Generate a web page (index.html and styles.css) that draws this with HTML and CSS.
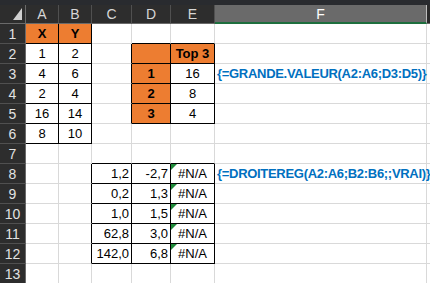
FILE: index.html
```html
<!DOCTYPE html>
<html>
<head>
<meta charset="utf-8">
<link rel="stylesheet" href="styles.css">
</head>
<body>
<div class="topbar"></div>
<div class="sheet">
  <div class="hd corner"><span class="tri"></span></div>
  <div class="hd">A</div>
  <div class="hd">B</div>
  <div class="hd">C</div>
  <div class="hd">D</div>
  <div class="hd">E</div>
  <div class="hd sel">F</div>
  <div class="hd rest"></div>

  <div class="rh">1</div>
  <div class="cell or bold c bx">X</div>
  <div class="cell or bold c bx">Y</div>
  <div class="cell"></div>
  <div class="cell bb"></div>
  <div class="cell bb"></div>
  <div class="cell"></div>
  <div class="cell end"></div>

  <div class="rh">2</div>
  <div class="cell c bx">1</div>
  <div class="cell c bx">2</div>
  <div class="cell br"></div>
  <div class="cell or bx"></div>
  <div class="cell or bold c bx">Top 3</div>
  <div class="cell"></div>
  <div class="cell end"></div>

  <div class="rh">3</div>
  <div class="cell c bx">4</div>
  <div class="cell c bx">6</div>
  <div class="cell br"></div>
  <div class="cell or bold c bx">1</div>
  <div class="cell c bx">16</div>
  <div class="cell f">{=GRANDE.VALEUR(A2:A6;D3:D5)}</div>
  <div class="cell end"></div>

  <div class="rh">4</div>
  <div class="cell c bx">2</div>
  <div class="cell c bx">4</div>
  <div class="cell br"></div>
  <div class="cell or bold c bx">2</div>
  <div class="cell c bx">8</div>
  <div class="cell"></div>
  <div class="cell end"></div>

  <div class="rh">5</div>
  <div class="cell c bx">16</div>
  <div class="cell c bx">14</div>
  <div class="cell br"></div>
  <div class="cell or bold c bx">3</div>
  <div class="cell c bx">4</div>
  <div class="cell"></div>
  <div class="cell end"></div>

  <div class="rh">6</div>
  <div class="cell c bx">8</div>
  <div class="cell c bx">10</div>
  <div class="cell"></div>
  <div class="cell"></div>
  <div class="cell"></div>
  <div class="cell"></div>
  <div class="cell end"></div>

  <div class="rh">7</div>
  <div class="cell"></div>
  <div class="cell"></div>
  <div class="cell bb"></div>
  <div class="cell bb"></div>
  <div class="cell bb"></div>
  <div class="cell"></div>
  <div class="cell end"></div>

  <div class="rh">8</div>
  <div class="cell"></div>
  <div class="cell br"></div>
  <div class="cell r bx">1,2</div>
  <div class="cell r bx">-2,7</div>
  <div class="cell c bx err">#N/A</div>
  <div class="cell f">{=DROITEREG(A2:A6;B2:B6;;VRAI)}</div>
  <div class="cell end"></div>

  <div class="rh">9</div>
  <div class="cell"></div>
  <div class="cell br"></div>
  <div class="cell r bx">0,2</div>
  <div class="cell r bx">1,3</div>
  <div class="cell c bx err">#N/A</div>
  <div class="cell"></div>
  <div class="cell end"></div>

  <div class="rh">10</div>
  <div class="cell"></div>
  <div class="cell br"></div>
  <div class="cell r bx">1,0</div>
  <div class="cell r bx">1,5</div>
  <div class="cell c bx err">#N/A</div>
  <div class="cell"></div>
  <div class="cell end"></div>

  <div class="rh">11</div>
  <div class="cell"></div>
  <div class="cell br"></div>
  <div class="cell r bx">62,8</div>
  <div class="cell r bx">3,0</div>
  <div class="cell c bx err">#N/A</div>
  <div class="cell"></div>
  <div class="cell end"></div>

  <div class="rh">12</div>
  <div class="cell"></div>
  <div class="cell br"></div>
  <div class="cell r bx">142,0</div>
  <div class="cell r bx">6,8</div>
  <div class="cell c bx err">#N/A</div>
  <div class="cell"></div>
  <div class="cell end"></div>

  <div class="rh">13</div>
  <div class="cell"></div>
  <div class="cell"></div>
  <div class="cell"></div>
  <div class="cell"></div>
  <div class="cell"></div>
  <div class="cell"></div>
  <div class="cell end"></div>
</div>
</body>
</html>
```

FILE: styles.css
```css
html, body {
  margin: 0;
  padding: 0;
  background: #ffffff;
  overflow: hidden;
}
body {
  width: 430px;
  height: 283px;
  font-family: "Liberation Sans", Arial, sans-serif;
  font-size: 13px;
}
.topbar {
  height: 5px;
  background: #292b2f;
}
.sheet {
  display: grid;
  grid-template-columns: 26px 33px 33px 40px 39px 44px 212px 1fr;
  grid-template-rows: 19px repeat(13, 20px);
}
.hd {
  background: #2d2d2d;
  color: #d6d6d6;
  border-right: 1px solid #505050;
  border-bottom: 1px solid #6a6a6a;
  display: flex;
  align-items: center;
  justify-content: center;
  font-size: 14px;
  box-sizing: border-box;
}
.hd.corner {
  position: relative;
  border-right-color: #6a6a6a;
}
.tri {
  position: absolute;
  right: 3px;
  bottom: 3px;
  width: 0;
  height: 0;
  border-left: 9px solid transparent;
  border-bottom: 12px solid #d0d0d0;
}
.hd.sel {
  background: #6a6a6a;
  color: #ffffff;
  border-bottom: 2px solid #1e6f3e;
  border-right: 1px solid #bdbdbd;
}
.hd.rest {
  border-right: none;
  background: #2b2b2b;
}
.rh {
  background: #2d2d2d;
  color: #e2e2e2;
  border-right: 1px solid #6a6a6a;
  border-bottom: 1px solid #505050;
  display: flex;
  align-items: center;
  justify-content: center;
  font-size: 14px;
  box-sizing: border-box;
}
.cell {
  box-sizing: border-box;
  border-right: 1px solid #d9d9d9;
  border-bottom: 1px solid #d9d9d9;
  display: flex;
  align-items: center;
  padding: 0 2px;
  color: #000000;
  white-space: nowrap;
  position: relative;
}
.cell.end {
  border-right: none;
}
.c { justify-content: center; }
.r { justify-content: flex-end; }
.bold { font-weight: bold; }
.or { background: #ed7d31; }
.bx {
  border-right-color: #000000;
  border-bottom-color: #000000;
}
.br { border-right-color: #000000; }
.bb { border-bottom-color: #000000; }
.f {
  color: #0070c0;
  font-weight: bold;
  font-size: 13px;
  letter-spacing: -0.3px;
  padding-left: 2px;
  overflow: visible;
  z-index: 1;
}
.err::before {
  content: "";
  position: absolute;
  left: 0;
  top: 0;
  width: 0;
  height: 0;
  border-top: 6px solid #1f8a3a;
  border-right: 6px solid transparent;
}
```
